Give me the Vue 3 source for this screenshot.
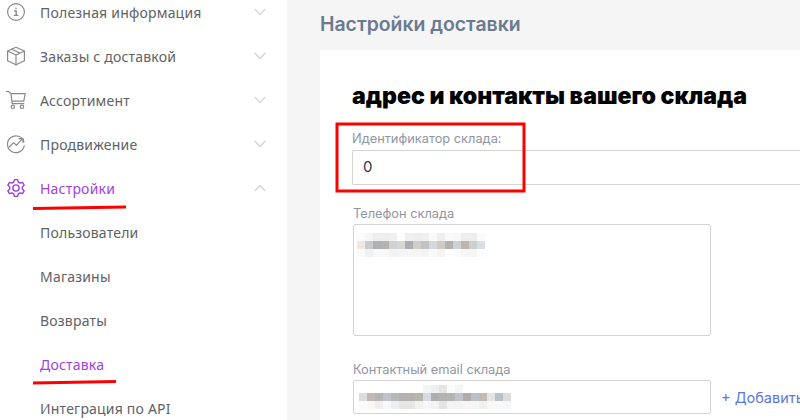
<script setup>
const items = [
  { label: 'Полезная информация', icon: 'info', chev: 'down' },
  { label: 'Заказы с доставкой', icon: 'box', chev: 'down' },
  { label: 'Ассортимент', icon: 'cart', chev: 'down' },
  { label: 'Продвижение', icon: 'chart', chev: 'down' },
  { label: 'Настройки', icon: 'gear', chev: 'up', active: true },
  { label: 'Пользователи' },
  { label: 'Магазины' },
  { label: 'Возвраты' },
  { label: 'Доставка', active: true },
  { label: 'Интеграция по API' }
]
const phoneBlur = [
  ['#fbfbfb','#f6f6f6','#eeeeee','#eeeeee','#f0f0f0','#fdfdfd','#f0f0f0','#eeeeee','#f0f0f0','#f9f9f9','#eeeeee','#f9f9f9','#f7f7f7','#eeeeee','#eeeeee','#fafbfc'],
  ['#f2e6e0','#c5cbd0','#b0b0b2','#b5b3b0','#cfd3d4','#d6d6d2','#aeaeb2','#d0cec8','#c0c2c4','#d5d9dc','#cfcac4','#b2b2b0','#cdd1d5','#bcb6ae','#ccd0d2','#dadee2'],
  ['#fbfaf9','#eff1f3','#f8f8f8','#f8f8f8','#f5f3f2','#f4f5f8','#f6f6f6','#f6f6f6','#f4f4f4','#f9f9f9','#f5f5f5','#ffffff','#fbfbfb','#f6f6f4','#f6f6f4','#fcfcfc']
]
const emailBlur = [
  ['#fff','#fff','#fff','#fff','#fff','#fff','#fff','#fff','#f4f4f4','#eeeff1','#e4e4e4','#fbfbfb','#f5f5f5','#fff','#fff','#fff','#fff','#fff','#fff'],
  ['#dddddd','#c0bab4','#b5b5b5','#c0c4c8','#b8b8b8','#b4b2b0','#b8b2ac','#b8b4ae','#d5dce2','#aeaeae','#b4b2b0','#b4b4b4','#c0c4c8','#b0aeac','#bcc0c4','#c4bcb4','#e4e4e2','#b8c2ca','#dcdcdc'],
  ['#fafafa','#f8f7f6','#eeeeee','#f7f8f9','#eeeeee','#e6e6e6','#e6e6e6','#f2f2f2','#f7f7f7','#f2f2f2','#e4e4e4','#f4f4f4','#f3f3f3','#f5f5f5','#f5f6f7','#f0f0f0','#f8f8f8','#f8f8f8','#f7f7f7']
]
</script>

<template>
  <div class="page">
    <aside class="sidebar">
      <div v-for="item in items" :key="item.label" class="row" :class="{ active: item.active, sub: !item.icon }">
        <span v-if="item.icon" class="icon">
          <svg viewBox="0 0 20 20" width="20" height="20" fill="none" stroke="currentColor" stroke-width="1.2" stroke-linecap="round" stroke-linejoin="round">
            <template v-if="item.icon === 'info'">
              <circle cx="10" cy="10" r="8.4" />
              <path d="M8.6 9h1.6v4.4M8.4 13.4h3.4M10 6.1v.6" stroke-width="1.4" />
            </template>
            <template v-else-if="item.icon === 'box'">
              <path d="M10 1.2l8.4 3.8v9.8L10 18.8l-8.4-4V5z" />
              <path d="M1.6 5L10 9l8.4-4M10 9v9.8M5.6 3.2l8.4 3.9" />
            </template>
            <template v-else-if="item.icon === 'cart'">
              <path d="M0.5 1.5h2.2l2.3 2.2 1.2 10h11.5M5 3.7h14.2l-1.4 7.4H5.9" />
              <circle cx="6.8" cy="16.8" r="1.7" />
              <circle cx="16" cy="16.8" r="1.7" />
            </template>
            <template v-else-if="item.icon === 'chart'">
              <path d="M18 8a8.4 8.4 0 1 0 .2 3.6" />
              <path d="M3.2 13l4.3-4.4 3 2.6 5.8-6.4M13 4.6h4v3.9" />
            </template>
            <template v-else>
              <path d="M8.4 1.6h3.2l.6 2.5 1.8 1 2.5-.7 1.6 2.8-1.8 1.8v2l1.8 1.8-1.6 2.8-2.5-.7-1.8 1-.6 2.5H8.4l-.6-2.5-1.8-1-2.5.7-1.6-2.8 1.8-1.8v-2L1.9 7.2l1.6-2.8 2.5.7 1.8-1z" stroke-width="1.4" />
              <circle cx="10" cy="10" r="3.1" stroke-width="1.4" />
            </template>
          </svg>
        </span>
        <span class="label">{{ item.label }}</span>
        <svg v-if="item.chev" class="chev" viewBox="0 0 12 8" width="12" height="8" fill="none" stroke="#d6d6d6" stroke-width="1.5">
          <path :d="item.chev === 'down' ? 'M0.8 1L6 6.4 11.2 1' : 'M0.8 7L6 1.6 11.2 7'" />
        </svg>
      </div>
    </aside>

    <main class="main">
      <h1 class="title">Настройки доставки</h1>
      <section class="card">
        <h2 class="heading">адрес и контакты вашего склада</h2>
        <div class="field-id">
          <div class="lbl">Идентификатор склада:</div>
          <div class="input id-input">0</div>
        </div>
        <div class="field-phone">
          <div class="lbl">Телефон склада</div>
          <div class="input area">
            <div class="blur phone-blur">
              <div v-for="(line, i) in phoneBlur" :key="i" class="blur-line">
                <i v-for="(c, j) in line" :key="j" :style="{ background: c }"></i>
              </div>
            </div>
          </div>
        </div>
        <div class="field-email">
          <div class="lbl">Контактный email склада</div>
          <div class="email-row">
            <div class="input email">
              <div class="blur email-blur">
                <div v-for="(line, i) in emailBlur" :key="i" class="blur-line">
                  <i v-for="(c, j) in line" :key="j" :style="{ background: c }"></i>
                </div>
              </div>
            </div>
            <span class="add">+ Добавить</span>
          </div>
        </div>
      </section>
    </main>

    <svg class="marks" width="800" height="420" viewBox="0 0 800 420" fill="none" stroke="#fe0000">
      <rect x="337" y="124" width="187" height="67" stroke-width="3" />
      <path d="M33 208.5L126 207" stroke-width="3" />
      <path d="M33 383L116 381.5" stroke-width="3" />
    </svg>
  </div>
</template>

<style>
html, body { margin: 0; padding: 0; background: #fff; }
</style>

<style scoped>
.page {
  position: relative;
  width: 800px;
  height: 420px;
  overflow: hidden;
  display: flex;
  background: #f5f5f5;
}
.sidebar {
  width: 287px;
  flex: none;
  height: 440px;
  margin-top: -10px;
  background: #fff;
  font-family: "Noto Sans", "Open Sans", sans-serif;
  font-size: 14px;
  color: #606266;
  letter-spacing: 0.2px;
}
.row {
  height: 44px;
  display: flex;
  align-items: center;
  padding-left: 6px;
  box-sizing: border-box;
}
.row.sub { padding-left: 40px; }
.row.active { color: #a23fe0; }
.icon {
  width: 34px;
  flex: none;
  display: flex;
  color: #8a8a8a;
}
.row.active .icon { color: #9a3fe0; }
.label { flex: 1; }
.chev { margin-right: 21px; }
.main {
  flex: 1;
  min-width: 0;
  padding-left: 33px;
}
.title {
  margin: 0;
  height: 50px;
  line-height: 48px;
  font-family: Inter, sans-serif;
  font-size: 19.4px;
  font-weight: 600;
  color: #6b7a90;
  white-space: nowrap;
}
.card {
  background: #fff;
  height: 370px;
  padding: 32px 0 0 32px;
  box-sizing: border-box;
  font-family: Inter, sans-serif;
}
.heading {
  margin: 0;
  height: 28px;
  line-height: 28px;
  font-size: 23.1px;
  font-weight: 900;
  color: #000;
  white-space: nowrap;
}
.lbl {
  font-size: 12.8px;
  line-height: 16px;
  color: #8f96a3;
  white-space: nowrap;
}
.field-id { margin-top: 21px; }
.input {
  box-sizing: border-box;
  background: #fff;
  border: 1px solid #d4d4d4;
  border-radius: 2px;
}
.id-input {
  width: 470px;
  height: 35px;
  line-height: 32px;
  padding-left: 10px;
  margin-top: 3px;
  font-size: 15px;
  color: #303540;
  border-right: none;
}
.field-phone { margin: 21px 0 0 1px; }
.area {
  width: 358px;
  height: 112px;
  margin-top: 2px;
}
.blur-line { display: flex; height: 8px; }
.blur-line i { display: block; width: 8px; height: 8px; }
.phone-blur { padding: 8px 0 0 3px; }
.field-email { margin: 26px 0 0 1px; }
.email-row {
  display: flex;
  align-items: center;
  margin-top: 2px;
}
.email {
  width: 358px;
  height: 34px;
  flex: none;
}
.email-blur { padding: 4px 0 0 5px; }
.add {
  margin-left: 10px;
  font-size: 14.5px;
  color: #5b78e0;
  white-space: nowrap;
}
.marks {
  position: absolute;
  left: 0;
  top: 0;
  pointer-events: none;
}
</style>
